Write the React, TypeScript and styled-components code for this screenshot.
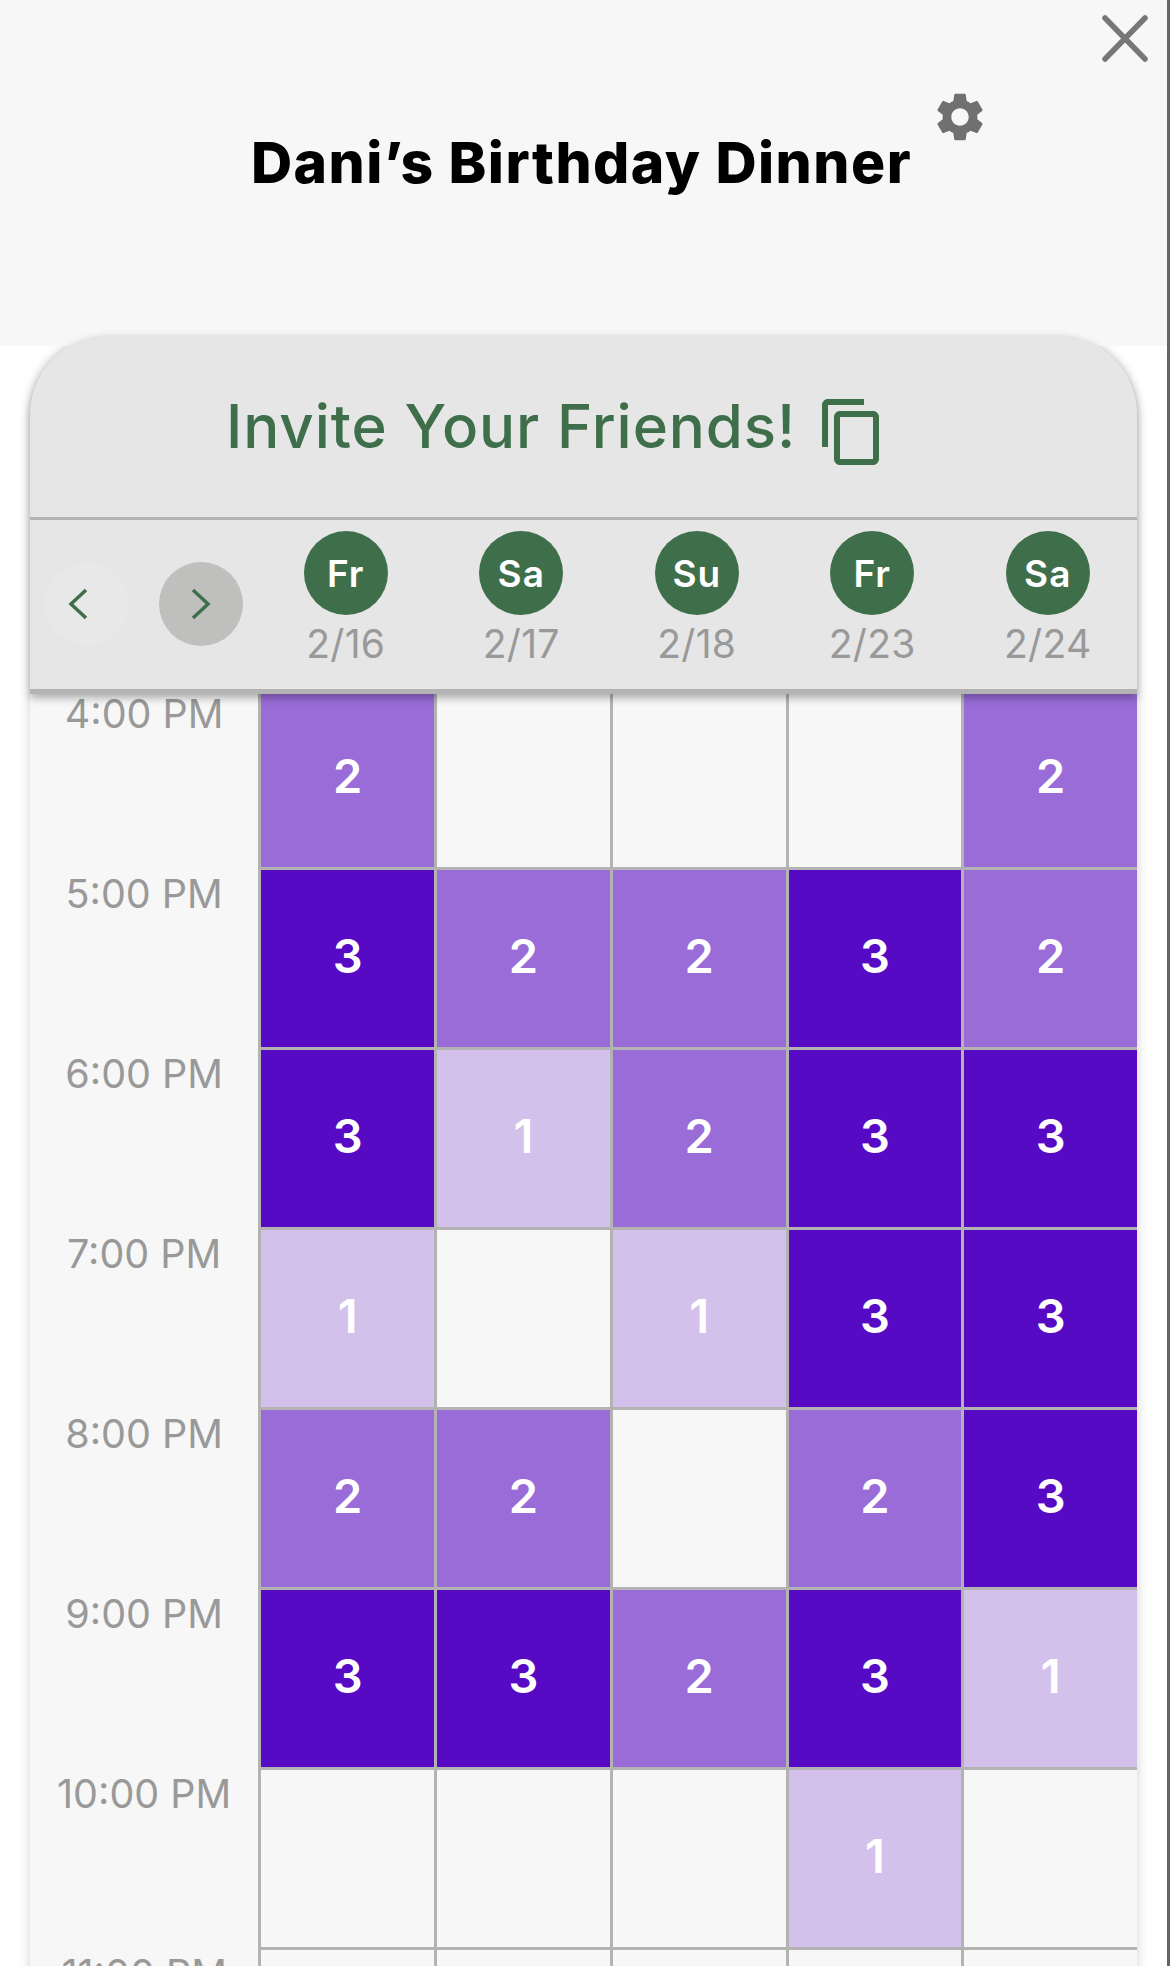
import styled, { createGlobalStyle } from 'styled-components';
import { MdOutlineContentCopy, MdSettings } from 'react-icons/md';

const GlobalStyle = createGlobalStyle`
	html, body {
		margin: 0;
		padding: 0;
		background: #fff;
	}
	* {
		box-sizing: border-box;
	}
`;

const days = [
	{ name: 'Fr', date: '2/16' },
	{ name: 'Sa', date: '2/17' },
	{ name: 'Su', date: '2/18' },
	{ name: 'Fr', date: '2/23' },
	{ name: 'Sa', date: '2/24' }
];

const rows = [
	{ time: '4:00 PM', counts: [2, 0, 0, 0, 2] },
	{ time: '5:00 PM', counts: [3, 2, 2, 3, 2] },
	{ time: '6:00 PM', counts: [3, 1, 2, 3, 3] },
	{ time: '7:00 PM', counts: [1, 0, 1, 3, 3] },
	{ time: '8:00 PM', counts: [2, 2, 0, 2, 3] },
	{ time: '9:00 PM', counts: [3, 3, 2, 3, 1] },
	{ time: '10:00 PM', counts: [0, 0, 0, 1, 0] },
	{ time: '11:00 PM', counts: [0, 0, 0, 0, 0] }
];

const cellColors = ['#f7f7f7', '#d3c1eb', '#9a6cd8', '#560ac4'];

const Page = styled.div`
	width: 1170px;
	height: 1966px;
	overflow: hidden;
	background: #fff;
	border-right: 3px solid #666;
	font-family: Inter, 'Noto Sans', sans-serif;
`;

const Header = styled.header`
	position: relative;
	height: 346px;
	padding-top: 125px;
	background: #f7f7f7;
	display: flex;
	justify-content: center;
	align-items: flex-start;
`;

const Title = styled.h1`
	margin: 0 0 0 -4px;
	font-size: 57px;
	line-height: 76px;
	font-weight: 800;
	letter-spacing: 1.45px;
	color: #000;
`;

const CloseButton = styled.svg`
	position: absolute;
	top: 15px;
	left: 1102px;
	width: 46px;
	height: 47px;
`;

const GearButton = styled.span`
	position: absolute;
	top: 88px;
	left: 931px;
	display: flex;
	color: #707070;
`;

const Card = styled.section`
	margin: -11px 30px 0;
	border-radius: 80px 80px 0 0;
	background: #f7f7f7;
	box-shadow: 0 0 12px rgba(0, 0, 0, 0.18);
	height: 1700px;
`;

const TopPanel = styled.div`
	position: relative;
	z-index: 1;
	height: 359px;
	border-radius: 80px 80px 0 0;
	background: #e6e6e6;
	border-bottom: 5px solid #b3b3b3;
	box-shadow: 0 4px 8px rgba(0, 0, 0, 0.3);
`;

const InviteBar = styled.div`
	height: 185px;
	padding: 53px 0 0 196px;
	display: flex;
	align-items: flex-start;
	border-bottom: 3px solid #b3b3b3;
	color: #3f6f4a;
`;

const InviteText = styled.span`
	font-size: 60px;
	line-height: 76px;
	font-weight: 500;
	letter-spacing: 0.9px;
`;

const CopyIcon = styled(MdOutlineContentCopy)`
	margin: 8px 0 0 20px;
`;

const DayBar = styled.div`
	height: 169px;
	display: grid;
	grid-template-columns: 228px repeat(5, 175.5px);
`;

const NavGroup = styled.div`
	display: flex;
	gap: 30px;
	padding: 42px 0 0 15px;
`;

const NavButton = styled.button<{ $active?: boolean }>`
	width: 84px;
	height: 84px;
	padding: 0 ${(p) => (p.$active ? '0' : '18px')} 0 0;
	border: 0;
	border-radius: 50%;
	display: flex;
	align-items: center;
	justify-content: center;
	background: ${(p) => (p.$active ? '#bfbfbd' : '#e8e8e8')};
	color: #3f6f4a;
`;

const DayColumn = styled.div`
	display: flex;
	flex-direction: column;
	align-items: center;
	padding-top: 11px;
`;

const DayBadge = styled.div`
	width: 84px;
	height: 84px;
	border-radius: 50%;
	background: #3f6f4a;
	color: #fff;
	display: flex;
	align-items: center;
	justify-content: center;
	font-size: 37px;
	font-weight: 600;
	letter-spacing: 1px;
`;

const DayDate = styled.div`
	margin-top: 6px;
	font-size: 39px;
	line-height: 46px;
	letter-spacing: 0.3px;
	color: #999;
`;

const Schedule = styled.div`
	margin-top: -4px;
`;

const Row = styled.div`
	height: 180px;
	display: grid;
	grid-template-columns: 228.3px 1fr;
`;

const TimeLabel = styled.div`
	text-align: center;
	font-size: 39.5px;
	line-height: 48px;
	color: #999;
`;

const Slots = styled.div`
	display: grid;
	grid-template-columns: repeat(5, 1fr);
	gap: 3px;
	padding: 0 0 3px 3px;
	background: #b3b3b3;
`;

const Slot = styled.div<{ $count: number }>`
	display: flex;
	align-items: center;
	justify-content: center;
	padding-bottom: 7px;
	background: ${(p) => cellColors[p.$count]};
	color: #fff;
	font-size: 47px;
	font-weight: 600;
`;

const App = () => {
	return (
		<Page>
			<GlobalStyle />
			<Header>
				<Title>Dani’s Birthday Dinner</Title>
				<GearButton>
					<MdSettings size={58} />
				</GearButton>
				<CloseButton viewBox="0 0 46 47" fill="none" stroke="#777" strokeWidth="5.5" strokeLinecap="round">
					<path d="M3 3L43 44M43 3L3 44" />
				</CloseButton>
			</Header>
			<Card>
				<TopPanel>
					<InviteBar>
						<InviteText>Invite Your Friends!</InviteText>
						<CopyIcon size={72} />
					</InviteBar>
					<DayBar>
						<NavGroup>
							<NavButton>
								<svg width="20" height="32" viewBox="0 0 20 32" fill="none" stroke="currentColor" strokeWidth="3.5">
									<path d="M18 2L3 16L18 30" />
								</svg>
							</NavButton>
							<NavButton $active>
								<svg width="20" height="32" viewBox="0 0 20 32" fill="none" stroke="currentColor" strokeWidth="3.5">
									<path d="M2 2L17 16L2 30" />
								</svg>
							</NavButton>
						</NavGroup>
						{days.map((day) => (
							<DayColumn key={day.date}>
								<DayBadge>{day.name}</DayBadge>
								<DayDate>{day.date}</DayDate>
							</DayColumn>
						))}
					</DayBar>
				</TopPanel>
				<Schedule>
					{rows.map((row) => (
						<Row key={row.time}>
							<TimeLabel>{row.time}</TimeLabel>
							<Slots>
								{row.counts.map((count, i) => (
									<Slot key={i} $count={count}>
										{count > 0 && count}
									</Slot>
								))}
							</Slots>
						</Row>
					))}
				</Schedule>
			</Card>
		</Page>
	);
};

export default App;
